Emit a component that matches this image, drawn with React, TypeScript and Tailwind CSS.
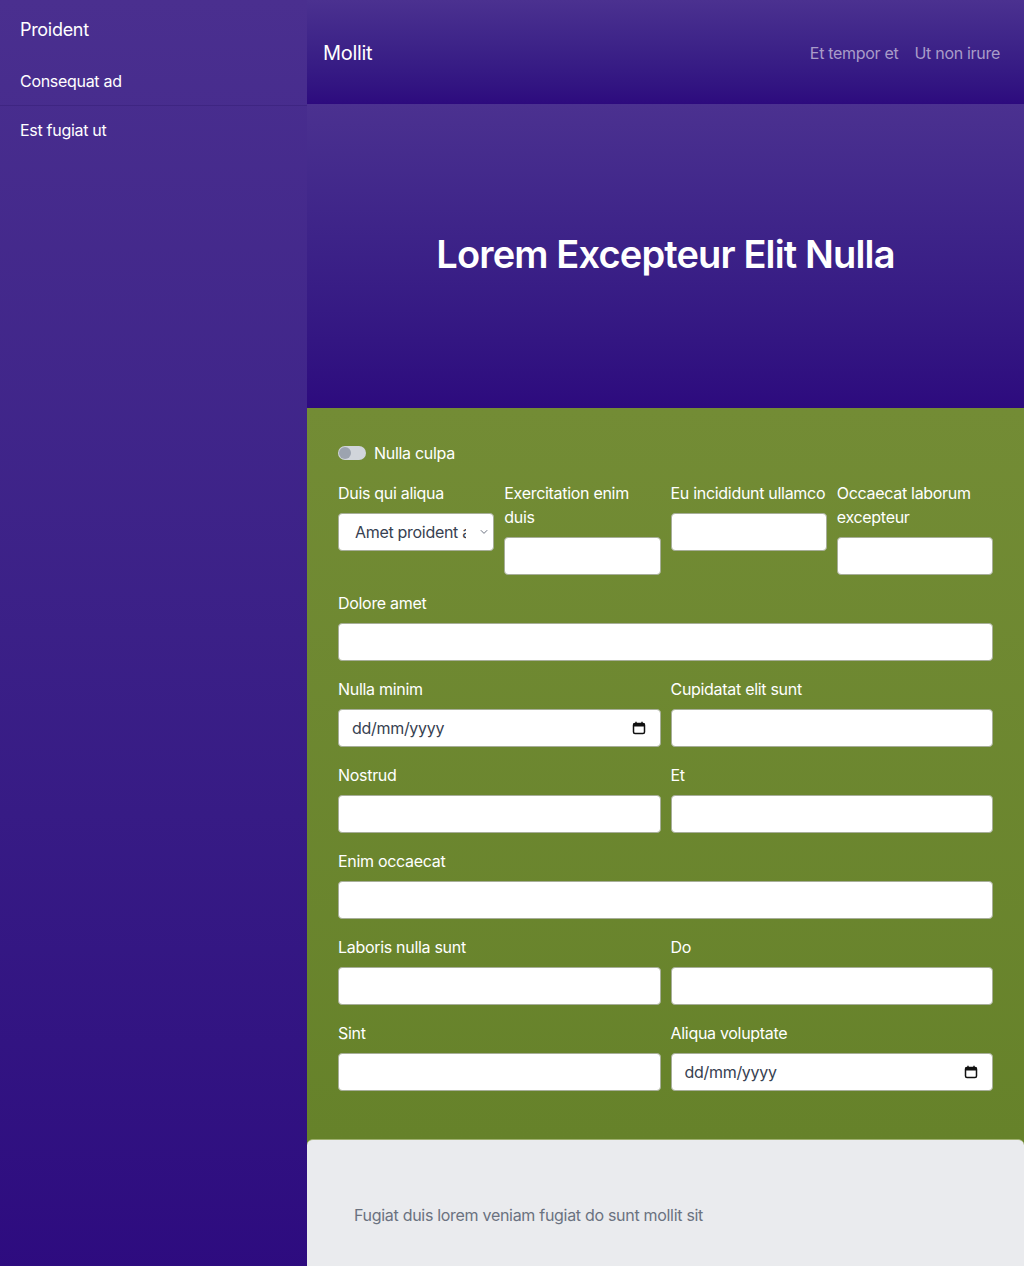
import React from "react";

const inputCls =
  "block w-full h-[38px] rounded-[4px] border border-[#a7ae99] bg-white px-3 text-base text-[#374151] outline-none";

function Field({ label, children }: { label: string; children?: React.ReactNode }) {
  return (
    <div className="flex flex-col">
      <label className="mb-2 text-base leading-6 text-white">{label}</label>
      {children ?? <input type="text" className={inputCls} />}
    </div>
  );
}

function DateBox() {
  return (
    <div className={inputCls + " flex items-center justify-between pl-[13px] pr-[14px]"}>
      <span className="text-[#374151]">dd/mm/yyyy</span>
      <svg width="14" height="14" viewBox="0 0 14 14" fill="none">
        <rect x="1.5" y="2.5" width="11" height="10" rx="1.5" stroke="#111" strokeWidth="1.5" />
        <rect x="1.5" y="2.5" width="11" height="3" fill="#111" />
        <line x1="4" y1="0.8" x2="4" y2="3" stroke="#111" strokeWidth="1.4" />
        <line x1="10" y1="0.8" x2="10" y2="3" stroke="#111" strokeWidth="1.4" />
      </svg>
    </div>
  );
}

export default function App() {
  return (
    <div className="flex min-h-screen font-['Inter',sans-serif] tracking-[-0.3px] antialiased">
      <aside className="w-[307px] shrink-0 bg-gradient-to-b from-[#4a2f8f] to-[#2d0a7f] text-white">
        <div className="px-5 pt-[17px] text-lg leading-[26px]">Proident</div>
        <div className="mt-[14px] border-b border-[#3e2582] px-5 py-3 text-base leading-6">Consequat ad</div>
        <div className="px-5 py-3 text-base leading-6">Est fugiat ut</div>
      </aside>
      <main className="flex flex-1 flex-col bg-[#66822a]">
        <header className="flex h-[104px] items-center justify-between bg-gradient-to-b from-[#4b3190] to-[#2d0a7e] pl-4 pr-6">
          <div className="pt-[2px] text-xl text-white">Mollit</div>
          <nav className="flex gap-4 pt-[2px] text-base text-[#a99cc9]">
            <a>Et tempor et</a>
            <a>Ut non irure</a>
          </nav>
        </header>
        <section className="flex h-[304px] items-center justify-center bg-gradient-to-b from-[#4b3190] to-[#2d0a7e]">
          <h1 className="pb-[4px] text-[38px] font-semibold tracking-[-0.85px] text-white">Lorem Excepteur Elit Nulla</h1>
        </section>
        <section className="flex flex-col gap-4 bg-gradient-to-b from-[#738c35] to-[#66822a] px-[31px] pb-12 pt-[33px]">
          <div className="flex h-6 items-center gap-2">
            <span className="relative inline-block h-[14px] w-[28px] rounded-full bg-[#d1d5db]">
              <span className="absolute left-[1px] top-[1px] h-[12px] w-[12px] rounded-full bg-[#9ca3af]" />
            </span>
            <span className="text-base text-white">Nulla culpa</span>
          </div>
          <div className="grid grid-cols-4 items-start gap-x-[10px]">
            <Field label="Duis qui aliqua">
              <div className={inputCls + " relative flex items-center pl-4 pr-[27px]"}>
                <span className="block overflow-hidden whitespace-nowrap">Amet proident aute</span>
                <span className="absolute right-[4px] top-0 flex h-full w-[10px] items-center justify-center">
                  <svg width="8" height="6" viewBox="0 0 8 6" fill="none">
                    <path d="M0.8 1.2 L4 4.4 L7.2 1.2" stroke="#6b7280" strokeWidth="1" />
                  </svg>
                </span>
              </div>
            </Field>
            <Field label="Exercitation enim duis" />
            <Field label="Eu incididunt ullamco" />
            <Field label="Occaecat laborum excepteur" />
          </div>
          <Field label="Dolore amet" />
          <div className="grid grid-cols-2 gap-x-[10px]">
            <Field label="Nulla minim">
              <DateBox />
            </Field>
            <Field label="Cupidatat elit sunt" />
          </div>
          <div className="grid grid-cols-2 gap-x-[10px]">
            <Field label="Nostrud" />
            <Field label="Et" />
          </div>
          <Field label="Enim occaecat" />
          <div className="grid grid-cols-2 gap-x-[10px]">
            <Field label="Laboris nulla sunt" />
            <Field label="Do" />
          </div>
          <div className="grid grid-cols-2 gap-x-[10px]">
            <Field label="Sint" />
            <Field label="Aliqua voluptate">
              <DateBox />
            </Field>
          </div>
        </section>
        <footer className="rounded-t-md border-t border-[#9fb06f] bg-[#eaebee] px-[47px] pb-16 pt-[63px] text-base leading-6 text-[#6b7280]">
          Fugiat duis lorem veniam fugiat do sunt mollit sit
        </footer>
      </main>
    </div>
  );
}
